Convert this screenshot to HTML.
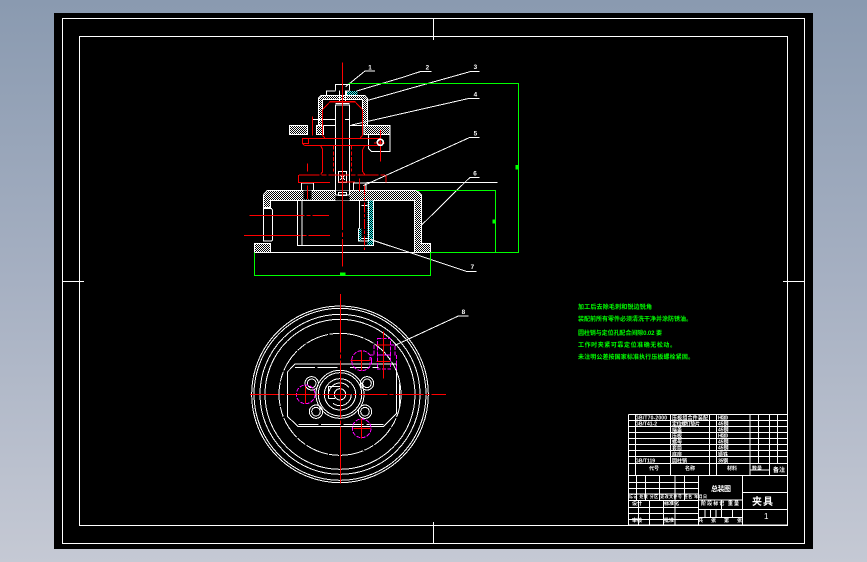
<!DOCTYPE html>
<html lang="zh">
<head>
<meta charset="utf-8">
<title>CAD Drawing</title>
<style>
html,body{margin:0;padding:0;width:867px;height:562px;overflow:hidden;background:linear-gradient(180deg,#8a9ab0 0%,#a6b0c2 50%,#c5c9d4 100%)}
svg{position:absolute;left:0;top:0}
text{font-family:"Liberation Sans","Noto Sans CJK SC",sans-serif}
</style>
</head>
<body>
<svg width="867" height="562" viewBox="0 0 867 562" shape-rendering="crispEdges">
<defs>
<pattern id="h" patternUnits="userSpaceOnUse" width="6" height="6"><rect width="6" height="6" fill="#000"/><rect width="3" height="3" fill="#fff"/><rect x="3" y="3" width="3" height="3" fill="#fff"/></pattern>
<pattern id="c" patternUnits="userSpaceOnUse" width="6" height="6"><rect width="6" height="6" fill="#000"/><rect width="3" height="3" fill="#3ff"/><rect x="3" y="3" width="3" height="3" fill="#3ff"/></pattern>
</defs>
<rect x="54" y="13" width="759" height="536" fill="#000"/>
<g fill="none" stroke="#fff" stroke-width="1">
<rect x="62.5" y="18.5" width="742" height="525"/>
<rect x="79.5" y="36.5" width="708" height="489"/>
<path d="M433.5 18V40M433.5 522V543M62 281.5H84M783 281.5H805"/>
</g>

<!-- Section view -->
<g transform="translate(230 55) scale(.33333)">
<g fill="url(#h)" stroke="#fff" stroke-width="3">
<path d="M178 212H232V238H178Z"/>
<path d="M402 212H480V238H402Z"/>
<path d="M260 212H277V238H260Z"/>
<path d="M265 130L272 122H405L412 130V212H398V134H277V212H265Z"/>
<path d="M100 420L112 406H560L575 420V565H602V592H553V436H122V458H100Z"/>
<path d="M73 565H122V592H73Z"/>
</g>
<rect x="316" y="406" width="42" height="30" fill="#000"/>
<rect x="220" y="406" width="24" height="28" fill="#000"/>
<g fill="url(#c)">
<rect x="350" y="108" width="32" height="12"/>
<rect x="413" y="436" width="18" height="136"/>
<rect x="386" y="520" width="8" height="38"/>
</g>
<g fill="none" stroke="#fff" stroke-width="3">
<path d="M73 592H602"/>
<path d="M410 382H803"/>
<path d="M316 106V88H358V106M290 122V108H316M358 108H350V122M328 106V138M346 106V138"/>
<path d="M316 420V150H358V420M322 150H352M316 146H358M316 420H358"/>
<path d="M248 194H316M280 212V240M280 212H316M358 212H400M345 194H358"/>
<path d="M232 212V238M260 212V238"/>
<path d="M480 238V290H425L415 280V238"/>
<path d="M214 406V384H250V406M370 406V384H408V406"/>
<path d="M202 436V572H385M216 436V572M382 572H430V436M388 436V520L385 523V558H416V436M394 452H412M394 550H412"/>
<path d="M100 460H124L128 466V555L124 558H100Z"/>
<path d="M325 350H350V382H325ZM330 360L345 375M345 360L330 375M325 412H350V422H325Z"/>
</g>
<g fill="none" stroke="#fff" stroke-width="3">
<path d="M347 95L405 48H435"/>
<path d="M380 108L515 68L570 50H605"/>
<path d="M410 137L720 50H748"/>
<path d="M365 210L718 130H748"/>
<path d="M400 392L720 247H748"/>
<path d="M575 510L720 367H748"/>
<path d="M420 553L712 650H740"/>
</g>
<g fill="none" stroke="#f00" stroke-width="3">
<path d="M337 22V525M337 532V546M337 552V635"/>
<path stroke-width="4" d="M300 140H375"/>
<path d="M277 240V165L300 140M398 240V165L375 140"/>
<path d="M277 240L285 250M398 240L390 250"/>
<path d="M217 250H450V272H225L217 266ZM217 266H236V250"/>
<path d="M248 184V242M451 225V320M432 264H465"/>
<path d="M272 272L278 284V350L272 358M404 272L398 284V350L404 358"/>
<path d="M310 272V350M364 272V350" stroke-dasharray="12 5"/>
<path stroke-width="4" d="M207 360H468" stroke-dasharray="62 6 14 6"/>
<path d="M205 360V382H300M468 360V382"/>
<path d="M325 381H375" stroke-width="4"/>
<path d="M232 326V350M232 392V432M388 370V408"/>
<path d="M403 392V585" stroke-dasharray="30 5 10 5"/>
<path d="M58 481H297" stroke-dasharray="165 6 12 6"/>
<path d="M42 541H300" stroke-dasharray="170 6 12 6"/>
</g>
<circle cx="451" cy="262" r="9" fill="none" stroke="#fff" stroke-width="5"/>
<g fill="none" stroke="#0f0" stroke-width="3">
<path d="M355 86H865V592H602"/>
<path d="M560 406H796V592"/>
<path d="M73 592V661H602V592"/>
</g>
<g fill="#0f0">
<rect x="330" y="652" width="16" height="8"/>
<rect x="856" y="330" width="8" height="14"/>
<rect x="787" y="494" width="8" height="12"/>
</g>
<g fill="#fff" font-size="19" font-weight="700" text-anchor="middle">
<text x="420" y="44">1</text>
<text x="592" y="44">2</text>
<text x="736" y="42">3</text>
<text x="736" y="124">4</text>
<text x="736" y="241">5</text>
<text x="735" y="362">6</text>
<text x="727" y="642">7</text>
</g>
</g>

<!-- Plan view -->
<g transform="translate(240 290) scale(.33333)">
<g fill="none" stroke="#fff" stroke-width="3">
<circle cx="300" cy="313" r="265"/>
<circle cx="300" cy="313" r="258"/>
<circle cx="300" cy="313" r="240"/>
<circle cx="300" cy="313" r="225"/>
<circle cx="300" cy="313" r="183" stroke-dasharray="70 4 30 4"/>
<path d="M165 222H470V370L430 410H175L143 380V245Z"/>
<path d="M175 403H430" stroke-dasharray="60 8"/>
<path d="M165 232H300M330 232H415" stroke-dasharray="60 8"/>
<path d="M478 280V350"/>
<circle cx="300" cy="313" r="72"/>
<circle cx="300" cy="313" r="65"/>
<circle cx="300" cy="313" r="47"/>
<circle cx="300" cy="313" r="34" stroke-dasharray="75 40"/>
<circle cx="300" cy="313" r="17"/>
<path d="M265 325H285M265 325V290H300"/>
<circle cx="215" cy="280" r="20"/><circle cx="215" cy="280" r="13"/>
<circle cx="381" cy="280" r="20"/><circle cx="381" cy="280" r="13"/>
<circle cx="228" cy="365" r="20"/><circle cx="228" cy="365" r="13"/>
<circle cx="375" cy="365" r="20"/><circle cx="375" cy="365" r="13"/>
<path d="M465 166L655 78H685"/>
</g>
<g fill="none" stroke="#f0f" stroke-width="3" stroke-dasharray="12 4">
<circle cx="365" cy="212" r="30"/>
<circle cx="197" cy="313" r="28"/>
<circle cx="365" cy="415" r="28"/>
<rect x="412" y="145" width="40" height="50"/>
<rect x="412" y="195" width="40" height="42"/>
<path d="M402 165V195H390V225M452 165H465V195H470V240"/>
</g>
<g fill="none" stroke="#f00" stroke-width="3">
<path d="M301 12V580" stroke-dasharray="175 6 12 6"/>
<path d="M30 313H618" stroke-dasharray="85 6 12 6"/>
<path d="M332 212H392M365 182V242"/>
<path d="M168 313H225M197 290V340"/>
<path d="M340 415H392M365 385V446"/>
<path d="M430 125V265M410 165H450M410 215H450"/>
</g>
<text x="670" y="72" fill="#fff" font-size="19" font-weight="700" text-anchor="middle">8</text>
</g>

<!-- Notes -->
<g fill="#0f0" font-size="6" font-weight="700" shape-rendering="auto">
<text x="578" y="309" textLength="74" lengthAdjust="spacing">加工后去除毛刺和锐边锐角</text>
<text x="578" y="321" textLength="114" lengthAdjust="spacing">装配前所有零件必须清洗干净并涂防锈油。</text>
<text x="578" y="335" textLength="84" lengthAdjust="spacing">圆柱销与定位孔配合间隙0.02 要</text>
<text x="578" y="347" textLength="98" lengthAdjust="spacing">工作时夹紧可靠定位准确无松动。</text>
<text x="578" y="359" textLength="116" lengthAdjust="spacing">未注明公差按国家标准执行压板螺栓紧固。</text>
</g>

<!-- Title block -->
<g transform="translate(620 405) scale(.33333)">
<g fill="none" stroke="#fff" stroke-width="3">
<path d="M25 28H502V360M25 28V360H502"/>
<path d="M25 46H502M25 64H502M25 82H502M25 100H502M25 118H502M25 136H502M25 155H502M25 175H502M25 212H502"/>
<path d="M46 28V212M152 28V212M268 28V212M290 28V212M390 28V212M415 28V175M448 28V212M472 28V175"/>
<path d="M390 195H448"/>
<path d="M25 232H236M25 250H236M25 267H236M25 287H236M25 307H236M25 325H236M25 343H236"/>
<path d="M50 212V287M77 212V287M118 212V287M165 212V287M193 212V287"/>
<path d="M55 287V360M88 287V360M130 287V360M165 287V360"/>
<path d="M236 212V360M367 212V360"/>
<path d="M236 285H367M236 313H367M236 338H367M367 262H502M367 313H502"/>
<path d="M255 313V338M272 313V338M288 313V338M304 285V338M338 313V338"/>
</g>
</g>
<g fill="#fff" font-size="5" font-weight="700" shape-rendering="auto">
<text x="635" y="419.5" textLength="32">GB/T70-2000</text>
<text x="635" y="425.5" textLength="22">GB/T41-2</text>
<text x="672" y="419.5" textLength="36">压板组合件装配</text>
<text x="672" y="425.5" textLength="28">定位螺钉垫片</text>
<text x="672" y="431.5">端盖</text>
<text x="672" y="437.5">压板</text>
<text x="672" y="443.5">螺母</text>
<text x="672" y="449.5">套筒</text>
<text x="672" y="456">底座</text>
<text x="672" y="462.5" textLength="15">圆柱销</text>
<text x="635" y="462.5" textLength="20">GB/T119</text>
<text x="718" y="419.5" textLength="10">HT200</text>
<text x="718" y="425.5">45钢</text>
<text x="718" y="431.5">45钢</text>
<text x="718" y="437.5" textLength="10">HT200</text>
<text x="718" y="443.5">45钢</text>
<text x="718" y="449.5">45钢</text>
<text x="718" y="456">铸铁</text>
<text x="718" y="462.5" textLength="10">35钢</text>
<text x="649" y="470">代号</text>
<text x="685" y="470">名称</text>
<text x="727" y="470">材料</text>
<text x="773" y="472" font-size="6">备注</text>
<text x="752" y="470" font-size="5" textLength="10">数量</text>
<text x="629" y="498" textLength="78" font-size="4">标记 处数 分区 更改文件号 签名 年月日</text>
<text x="632" y="505">设计</text>
<text x="664" y="505">标准化</text>
<text x="632" y="522">审核</text>
<text x="664" y="522">批准</text>
<text x="701" y="505" textLength="38">阶段标记 重量</text>
<text x="698" y="522" textLength="44">共 张 第 张</text>
<text x="711" y="491" textLength="20" font-size="7">总装图</text>
<text x="752" y="505" textLength="21" font-size="10">夹具</text>
<text x="764" y="519" font-size="8" font-weight="400">1</text>
</g>
</svg>
</body>
</html>
